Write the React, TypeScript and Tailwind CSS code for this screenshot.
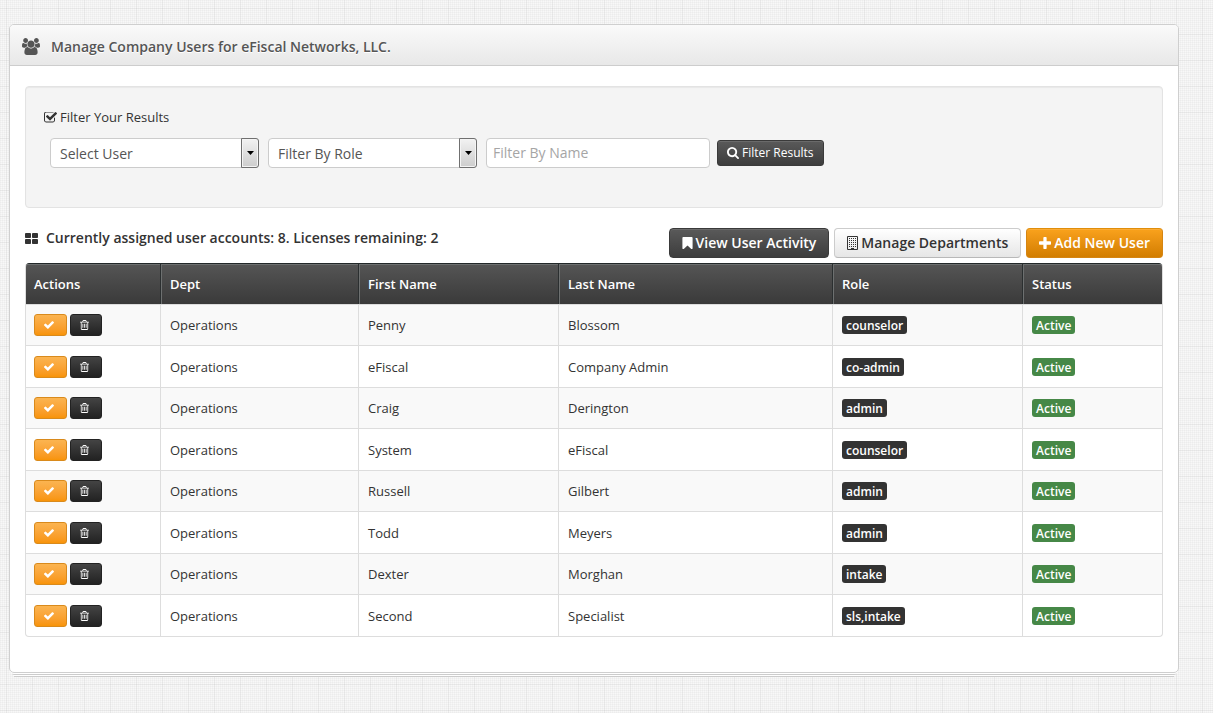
import type { ReactNode } from "react";

type IconProps = { className?: string };

function Glyph({ d, viewBox = "0 0 1792 1792", className = "" }: { d: string; viewBox?: string; className?: string }) {
  return (
    <svg viewBox={viewBox} fill="currentColor" aria-hidden="true" className={`shrink-0 ${className}`}>
      <path d={d} />
    </svg>
  );
}

const UsersIcon = ({ className }: IconProps) => (
  <Glyph
    className={className}
    viewBox="-64 0 1920 1792"
    d="M529 896q-162 5-265 128h-134q-82 0-138-40.500t-56-118.500q0-353 124-353 6 0 43.500 21t97.500 42.500 119 21.500q67 0 133-23-5 37-5 66 0 139 81 256zm1071 637q0 120-73 189.500t-194 69.500h-874q-121 0-194-69.500t-73-189.500q0-53 3.500-103.500t14-109 26.500-108.500 43-97.500 62-81 85.500-53.500 111.500-20q10 0 43 21.500t73 48 107 48 135 21.500 135-21.500 107-48 73-48 43-21.500q61 0 111.500 20t85.500 53.500 62 81 43 97.500 26.500 108.500 14 109 3.500 103.500zm-1024-1277q0 106-75 181t-181 75-181-75-75-181 75-181 181-75 181 75 75 181zm704 384q0 159-112.500 271.500t-271.500 112.500-271.500-112.500-112.500-271.500 112.500-271.500 271.500-112.500 271.500 112.500 112.500 271.500zm576 225q0 78-56 118.500t-138 40.500h-134q-103-123-265-128 81-117 81-256 0-29-5-66 66 23 133 23 59 0 119-21.500t97.500-42.500 43.500-21q124 0 124 353zm-128-609q0 106-75 181t-181 75-181-75-75-181 75-181 181-75 181 75 75 181z"
  />
);

const CheckSquareIcon = ({ className }: IconProps) => (
  <Glyph
    className={className}
    viewBox="64 192 1664 1408"
    d="M1472 930v318q0 119-84.500 203.500t-203.500 84.500h-832q-119 0-203.500-84.500t-84.500-203.500v-832q0-119 84.500-203.500t203.500-84.500h832q63 0 117 25 15 7 18 23 3 17-9 29l-49 49q-10 10-23 10-3 0-9-2-23-6-45-6h-832q-66 0-113 47t-47 113v832q0 66 47 113t113 47h832q66 0 113-47t47-113v-254q0-13 9-22l64-64q10-10 23-10 6 0 12 3 20 8 20 29zm231-489l-814 814q-24 24-57 24t-57-24l-430-430q-24-24-24-57t24-57l110-110q24-24 57-24t57 24l263 263 647-647q24-24 57-24t57 24l110 110q24 24 24 57t-24 57z"
  />
);

const SearchIcon = ({ className }: IconProps) => (
  <Glyph
    className={className}
    viewBox="64 128 1664 1664"
    d="M1216 832q0-185-131.500-316.500t-316.500-131.500-316.500 131.500-131.500 316.500 131.500 316.500 316.500 131.500 316.500-131.500 131.500-316.500zm512 832q0 52-38 90t-90 38q-54 0-90-38l-343-342q-179 124-399 124-143 0-273.500-55.500t-225-150-150-225-55.500-273.500 55.500-273.500 150-225 225-150 273.500-55.500 273.500 55.500 225 150 150 225 55.500 273.500q0 220-124 399l343 343q37 37 37 90z"
  />
);

const GridIcon = ({ className }: IconProps) => (
  <Glyph
    className={className}
    viewBox="64 128 1664 1408"
    d="M832 1024v384q0 52-38 90t-90 38h-512q-52 0-90-38t-38-90v-384q0-52 38-90t90-38h512q52 0 90 38t38 90zm0-768v384q0 52-38 90t-90 38h-512q-52 0-90-38t-38-90v-384q0-52 38-90t90-38h512q52 0 90 38t38 90zm896 768v384q0 52-38 90t-90 38h-512q-52 0-90-38t-38-90v-384q0-52 38-90t90-38h512q52 0 90 38t38 90zm0-768v384q0 52-38 90t-90 38h-512q-52 0-90-38t-38-90v-384q0-52 38-90t90-38h512q52 0 90 38t38 90z"
  />
);

const BookmarkIcon = ({ className }: IconProps) => (
  <Glyph
    className={className}
    viewBox="256 128 1280 1508"
    d="M1420 128q23 0 44 9 33 13 52.500 41t19.500 62v1289q0 34-19.500 62t-52.500 41q-19 8-44 8-48 0-83-32l-441-424-441 424q-36 33-83 33-23 0-44-9-33-13-52.500-41t-19.500-62v-1289q0-34 19.500-62t52.500-41q21-9 44-9h1048z"
  />
);

const PlusIcon = ({ className }: IconProps) => (
  <Glyph
    className={className}
    viewBox="192 128 1408 1408"
    d="M1600 736v192q0 40-28 68t-68 28h-416v416q0 40-28 68t-68 28h-192q-40 0-68-28t-28-68v-416h-416q-40 0-68-28t-28-68v-192q0-40 28-68t68-28h416v-416q0-40 28-68t68-28h192q40 0 68 28t28 68v416h416q40 0 68 28t28 68z"
  />
);

const CheckIcon = ({ className }: IconProps) => (
  <Glyph
    className={className}
    viewBox="121 334 1550 1188"
    d="M1671 566q0 40-28 68l-724 724-136 136q-28 28-68 28t-68-28l-136-136-362-362q-28-28-28-68t28-68l136-136q28-28 68-28t68 28l294 295 656-657q28-28 68-28t68 28l136 136q28 28 28 68z"
  />
);

const TrashIcon = ({ className }: IconProps) => (
  <Glyph
    className={className}
    viewBox="192 128 1408 1536"
    d="M704 736v576q0 14-9 23t-23 9h-64q-14 0-23-9t-9-23v-576q0-14 9-23t23-9h64q14 0 23 9t9 23zm256 0v576q0 14-9 23t-23 9h-64q-14 0-23-9t-9-23v-576q0-14 9-23t23-9h64q14 0 23 9t9 23zm256 0v576q0 14-9 23t-23 9h-64q-14 0-23-9t-9-23v-576q0-14 9-23t23-9h64q14 0 23 9t9 23zm128 724v-948h-896v948q0 22 7 40.500t14.500 27 10.500 8.500h832q3 0 10.500-8.500t14.500-27 7-40.500zm-672-1076h448l-48-117q-7-9-17-11h-317q-10 2-17 11zm928 32v64q0 14-9 23t-23 9h-96v948q0 83-47 143.500t-113 60.500h-832q-66 0-113-58.500t-47-141.500v-952h-96q-14 0-23-9t-9-23v-64q0-14 9-23t23-9h309l70-167q15-37 54-63t79-26h320q40 0 79 26t54 63l70 167h309q14 0 23 9t9 23z"
  />
);

const BuildingIcon = ({ className = "" }: IconProps) => (
  <svg viewBox="0 0 11 14" aria-hidden="true" className={`shrink-0 ${className}`}>
    <path d="M0.5 0.5h10v13h-10z" fill="none" stroke="currentColor" />
    <path
      d="M2 2.500h7M2 4.500h7M2 6.500h7M2 8.500h7M2 10.500h7"
      stroke="currentColor"
      strokeDasharray="1 1"
    />
    <path d="M4 12h3v2h-3z" fill="currentColor" />
  </svg>
);

function FilterSelect({ label }: { label: string }) {
  return (
    <div className="relative w-[209px]">
      <select
        aria-label={label}
        className="block h-[30px] w-full appearance-none rounded-[4px] border border-[#ccc] bg-white pt-px pr-5 pl-[9px] text-[14px] text-[#555]"
      >
        <option>{label}</option>
      </select>
      <span className="pointer-events-none absolute inset-y-0 right-0 flex w-[18px] items-center justify-center rounded-r-[3px] border border-[#707070] bg-linear-to-b from-[#f2f2f2] to-[#cdcdcd] shadow-[inset_0_0_0_1px_#f4f4f4]">
        <svg viewBox="0 0 7 4" className="h-1 w-[7px]" aria-hidden="true">
          <path d="M0 0h7L3.500 4z" fill="#000" />
        </svg>
      </span>
    </div>
  );
}

const toolbarTones = {
  dark: "border-[#3a3a3a] bg-linear-to-b from-[#5a5a5a] to-[#3d3d3d] text-white shadow-[inset_0_1px_0_#6a6a6a]",
  light: "border-[#ccc] border-b-[#b8b8b8] bg-linear-to-b from-white to-[#e6e6e6] text-[#333]",
  orange: "border-[#d58512] border-t-[#e08e0b] bg-linear-to-b from-[#faa21c] to-[#d27d00] text-white shadow-[inset_0_1px_0_#fbab35]",
};

function ToolbarButton({ tone, children }: { tone: keyof typeof toolbarTones; children: ReactNode }) {
  return (
    <button
      type="button"
      className={`flex h-[30px] items-center rounded-[4px] border px-3 text-[14px] font-semibold whitespace-nowrap ${toolbarTones[tone]}`}
    >
      {children}
    </button>
  );
}

const columns = ["Actions", "Dept", "First Name", "Last Name", "Role", "Status"];

const users = [
  { first: "Penny", last: "Blossom", role: "counselor" },
  { first: "eFiscal", last: "Company Admin", role: "co-admin" },
  { first: "Craig", last: "Derington", role: "admin" },
  { first: "System", last: "eFiscal", role: "counselor" },
  { first: "Russell", last: "Gilbert", role: "admin" },
  { first: "Todd", last: "Meyers", role: "admin" },
  { first: "Dexter", last: "Morghan", role: "intake" },
  { first: "Second", last: "Specialist", role: "sls,intake" },
];

function Badge({ color, children }: { color: string; children: ReactNode }) {
  return (
    <span className={`block h-[18px] w-fit rounded-[3px] px-1 text-[12px] leading-5 font-semibold text-white ${color}`}>
      {children}
    </span>
  );
}

function UsersTable() {
  return (
    <div className="mt-[5px] overflow-hidden rounded-[4px] border border-t-0 border-[#ddd]">
      <table className="w-full table-fixed border-separate border-spacing-0 text-left">
        <colgroup>
          <col className="w-[134px]" />
          <col className="w-[198px]" />
          <col className="w-[200px]" />
          <col />
          <col className="w-[190px]" />
          <col className="w-[140px]" />
        </colgroup>
        <thead>
          <tr className="h-[41px]">
            {columns.map((name) => (
              <th
                key={name}
                scope="col"
                className="border-t border-l border-t-[#222829] border-l-[#2b2f30] bg-linear-to-b from-[#555] to-[#3a3a3a] pr-2 pl-[9px] text-[13px] font-semibold text-white shadow-[inset_1px_1px_0_#6d7070] first:border-l-0 first:pl-2 first:shadow-[inset_0_1px_0_#6d7070]"
              >
                {name}
              </th>
            ))}
          </tr>
        </thead>
        <tbody>
          {users.map((user) => (
            <tr
              key={`${user.first} ${user.last}`}
              className="odd:h-[41px] odd:bg-[#f9f9f9] even:h-[42px] [&>td]:border-t [&>td]:border-l [&>td]:border-[#ddd] [&>td]:py-0 [&>td]:pr-2 [&>td]:pl-[9px] [&>td:first-child]:border-l-0 [&>td:first-child]:pl-2"
            >
              <td>
                <div className="flex items-center gap-[3px]">
                  <button
                    type="button"
                    aria-label={`Edit ${user.first} ${user.last}`}
                    className="flex h-[22px] w-[33px] items-center rounded-[3px] border border-[#d98a1c] bg-linear-to-b from-[#fbb450] to-[#f89406] pl-[9px] text-white"
                  >
                    <CheckIcon className="h-2 w-[10px]" />
                  </button>
                  <button
                    type="button"
                    aria-label={`Delete ${user.first} ${user.last}`}
                    className="flex h-[22px] w-8 items-center rounded-[3px] border border-[#222] bg-linear-to-b from-[#444] to-[#222] pl-[9px] text-white"
                  >
                    <TrashIcon className="h-[10px] w-[9px]" />
                  </button>
                </div>
              </td>
              <td>Operations</td>
              <td>{user.first}</td>
              <td>{user.last}</td>
              <td>
                <Badge color="bg-[#333]">{user.role}</Badge>
              </td>
              <td>
                <Badge color="bg-[#468847]">Active</Badge>
              </td>
            </tr>
          ))}
        </tbody>
      </table>
    </div>
  );
}

export default function App() {
  return (
    <div className="min-h-screen bg-[#f8f8f8] bg-[linear-gradient(90deg,rgba(0,0,0,0.035)_1px,transparent_1px),linear-gradient(rgba(0,0,0,0.035)_1px,transparent_1px),linear-gradient(90deg,rgba(0,0,0,0.025)_1px,transparent_1px),linear-gradient(rgba(0,0,0,0.025)_1px,transparent_1px)] bg-[size:26px_26px,26px_26px,2px_2px,2px_2px] bg-[position:6px_8px,6px_8px,0_0,0_0] pt-6 pr-[34px] pb-9 pl-[9px] font-['Open_Sans',sans-serif] text-[13px] leading-5 text-[#333]">
      <main className="rounded-[5px] border border-[#cfcfcf] bg-white shadow-[0_2px_0_-1px_#fff,0_5px_0_-3px_#ccc,0_7px_0_-4px_#fff,0_9px_0_-5px_#ccc]">
        <header className="flex h-[41px] items-center gap-[11px] rounded-t-[4px] border-b border-[#cdcdcd] bg-linear-to-b from-[#fafafa] to-[#e8e8e8] pt-[3px] pl-3 text-[#555]">
          <UsersIcon className="h-[17px] w-[18px]" />
          <h1 className="text-[14px] font-semibold [text-shadow:0_1px_0_#fff]">
            Manage Company Users for eFiscal Networks, LLC.
          </h1>
        </header>

        <div className="px-[15px] pt-5 pb-[35px]">
          <form className="h-[122px] rounded-[4px] border border-[#e3e3e3] bg-[#f4f4f4] px-[18px] pt-5 shadow-[inset_0_1px_1px_rgba(0,0,0,0.05)]">
            <div className="flex items-center gap-[3px]">
              <CheckSquareIcon className="h-[11px] w-[13px]" />
              <span>Filter Your Results</span>
            </div>
            <div className="mt-[11px] flex items-center gap-[9px] pl-[6px]">
              <FilterSelect label="Select User" />
              <FilterSelect label="Filter By Role" />
              <div className="flex items-center gap-[7px]">
                <input
                  type="text"
                  aria-label="Filter By Name"
                  placeholder="Filter By Name"
                  className="h-[30px] w-[224px] rounded-[4px] border border-[#ccc] bg-white px-[6px] pb-[2px] text-[14px] placeholder:text-[#a5a5a5]"
                />
                <button
                  type="button"
                  className="flex h-[26px] items-center gap-[3px] rounded-[3px] border border-[#3a3a3a] bg-linear-to-b from-[#5a5a5a] to-[#3d3d3d] px-[9px] text-[12px] whitespace-nowrap text-white shadow-[inset_0_1px_0_#6a6a6a]"
                >
                  <SearchIcon className="size-3" />
                  Filter Results
                </button>
              </div>
            </div>
          </form>

          <div className="mt-5 flex items-start justify-between">
            <div className="flex items-center gap-2">
              <GridIcon className="h-[11px] w-[13px]" />
              <h2 className="text-[14px] font-semibold">
                Currently assigned user accounts: 8. Licenses remaining: 2
              </h2>
            </div>
            <div className="flex gap-[5px]">
              <ToolbarButton tone="dark">
                <BookmarkIcon className="mr-[3px] h-3 w-[11px]" />
                View User Activity
              </ToolbarButton>
              <ToolbarButton tone="light">
                <BuildingIcon className="mr-[3px] h-[14px] w-[11px]" />
                Manage Departments
              </ToolbarButton>
              <ToolbarButton tone="orange">
                <PlusIcon className="mr-[3px] size-3" />
                Add New User
              </ToolbarButton>
            </div>
          </div>

          <UsersTable />
        </div>
      </main>
    </div>
  );
}
